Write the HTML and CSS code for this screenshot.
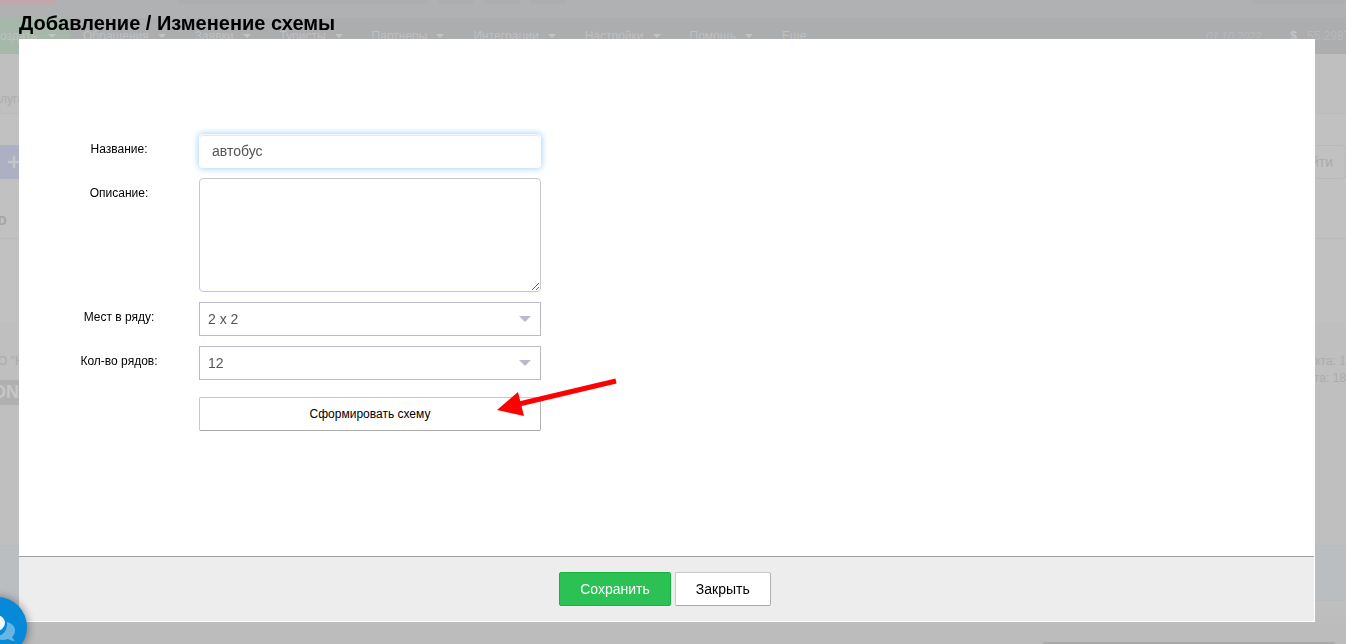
FILE: index.html
```
<!DOCTYPE html>
<html lang="ru">
<head>
<meta charset="utf-8">
<title>Добавление / Изменение схемы</title>
<link rel="stylesheet" href="styles.css">
</head>
<body>
<div class="backdrop">
  <div class="tabs">
    <span class="tab tab-alert"></span>
    <span class="tab tab-wide"></span>
    <span class="tab"></span>
    <span class="tab"></span>
    <span class="tab"></span>
    <span class="tab tab-end"></span>
  </div>
  <nav class="menu">
    <a class="menu-item menu-create" href="#">Создать<i class="caret"></i></a>
    <a class="menu-item" href="#">Обращения<i class="caret"></i></a>
    <a class="menu-item" href="#">Заявки<i class="caret"></i></a>
    <a class="menu-item" href="#">Туристы<i class="caret"></i></a>
    <a class="menu-item" href="#">Партнеры<i class="caret"></i></a>
    <a class="menu-item" href="#">Интеграции<i class="caret"></i></a>
    <a class="menu-item" href="#">Настройки<i class="caret"></i></a>
    <a class="menu-item" href="#">Помощь<i class="caret"></i></a>
    <a class="menu-item" href="#">Еще ...</a>
    <span class="menu-date">01.10.2022</span>
    <b class="menu-currency">$</b>
    <span class="menu-rate">55.2987</span>
  </nav>
  <div class="crumbs"><span>луги</span></div>
  <div class="tools">
    <button class="tool-add" type="button" aria-label="Добавить">
      <svg width="14" height="14" viewBox="0 0 14 14"><path d="M7 2v10M2 7h10" stroke="#c6c6c6" stroke-width="2.500" stroke-linecap="round"/></svg>
    </button>
    <button class="tool-find" type="button">йти</button>
  </div>
  <div class="table-head">D</div>
  <div class="table-space"></div>
  <div class="details">
    <div class="details-left"><span class="company">О "К</span><b class="logo">ON</b></div>
    <div class="details-right"><span>укта: 1</span><span>та: 18</span></div>
  </div>
  <div class="band"></div>
  <div class="bottom"><span class="bottom-panel"></span></div>
</div>

<div class="overlay">
  <h1 class="title">Добавление / Изменение схемы</h1>
  <form class="dialog">
    <div class="fields">
      <label class="label" for="name">Название:</label>
      <input class="field input" id="name" type="text" value="автобус">
      <label class="label" for="description">Описание:</label>
      <textarea class="field textarea" id="description"></textarea>
      <label class="label" for="seats">Мест в ряду:</label>
      <div class="select-wrap">
        <select class="field select" id="seats"><option>2 x 2</option></select>
        <svg class="select-arrow" width="12" height="6" viewBox="0 0 12 6"><path d="M0 0h12L6 6z" fill="#bdb9cd"/></svg>
      </div>
      <label class="label" for="rows">Кол-во рядов:</label>
      <div class="select-wrap">
        <select class="field select" id="rows"><option>12</option></select>
        <svg class="select-arrow" width="12" height="6" viewBox="0 0 12 6"><path d="M0 0h12L6 6z" fill="#bdb9cd"/></svg>
      </div>
      <div class="build-wrap">
        <button class="button build" type="button">Сформировать схему</button>
        <svg class="pointer" width="120" height="38" viewBox="0 0 120 38">
          <path d="M119 3L22 26" stroke="#f00" stroke-width="5"/>
          <path d="M0 32L21 14L27 38z" fill="#f00"/>
        </svg>
      </div>
    </div>
    <footer class="actions">
      <button class="button save" type="submit">Сохранить</button>
      <button class="button close" type="button">Закрыть</button>
    </footer>
  </form>
</div>

<button class="chat" type="button" aria-label="Чат">
  <svg class="chat-icon" width="60" height="60" viewBox="0 0 60 60">
    <ellipse cx="27" cy="26" rx="11" ry="9" fill="#f0f8fd"/>
    <path d="M40 25C45 26 48 30 48 33C48 36 47 38 45 40Q46 42 48 44Q44 44 41 42C36 44 31 43 28 40C36 39 41 33 40 25Z" fill="#66b6e5"/>
  </svg>
</button>
</body>
</html>
```
FILE: styles.css
```
* {
  box-sizing: border-box;
}

body {
  margin: 0;
  height: 100vh;
  overflow: hidden;
  background: #bfbfbf;
  color: #000;
  font-family: "Liberation Sans", Arial, sans-serif;
  font-size: 12px;
}

button,
input,
select,
textarea {
  font-family: inherit;
}

/* Dimmed page behind the dialog */
.backdrop {
  display: flex;
  flex-direction: column;
  height: 100vh;
  color: #acacac;
}

.tabs {
  display: flex;
  gap: 10px;
  height: 18px;
  background: #b0b1b3;
}

.tab {
  width: 36px;
  height: 4px;
  border-radius: 0 0 4px 4px;
  background: #adaeb0;
}

.tab-alert {
  width: 56px;
  height: 5px;
  margin-right: 112px;
  background: #bfa7ab;
}

.tab-wide {
  width: 250px;
}

.tab-end {
  width: 94px;
  margin-left: auto;
}

.menu {
  display: flex;
  align-items: center;
  gap: 29px;
  height: 36px;
  overflow: hidden;
  background: #abadaf;
  white-space: nowrap;
}

.menu-item {
  display: flex;
  align-items: center;
  gap: 9px;
  color: #bfc0c2;
  text-decoration: none;
}

.menu-create {
  justify-content: flex-end;
  gap: 11px;
  width: 69px;
  height: 36px;
  margin-right: -15px;
  padding-right: 13px;
  background: #a5b8aa;
}

.caret {
  border: 4px solid transparent;
  border-top-color: #c2c3c5;
  border-bottom: 0;
}

.menu-date {
  margin-left: auto;
  color: #b8b9bb;
  font-size: 11px;
  font-style: italic;
}

.menu-currency {
  color: #c4c4c5;
}

.menu-rate {
  width: 39px;
  margin-left: -19px;
  color: #b8b9bb;
}

.crumbs {
  height: 60px;
  padding-top: 38px;
  border-bottom: 1px solid #bcbcbc;
}

.tools {
  display: flex;
  justify-content: space-between;
  height: 65px;
  padding-top: 31px;
  background: #c1c1c1;
}

.tool-add {
  display: flex;
  align-items: center;
  justify-content: flex-end;
  width: 21px;
  height: 34px;
  padding: 0;
  border: 0;
  background: #adafc3;
}

.tool-find {
  width: 60px;
  height: 34px;
  padding: 0 12px;
  border: 1px solid #b9b9b9;
  border-radius: 3px;
  background: none;
  color: #acacac;
  font-size: 14px;
  text-align: right;
}

.table-head {
  height: 60px;
  padding-top: 35px;
  border-bottom: 1px solid #bababa;
  background: #c1c1c1;
  color: #a4a4a4;
  font-weight: bold;
  text-indent: -2px;
}

.table-space {
  height: 83px;
  background: #c1c1c1;
}

.details {
  display: flex;
  justify-content: space-between;
  flex: 1;
  padding-top: 31px;
  line-height: 17px;
}

.details-left,
.details-right {
  display: flex;
  flex-direction: column;
}

.details-right {
  align-items: flex-end;
}

.company {
  text-indent: -2px;
}

.logo {
  height: 25px;
  margin-top: 10px;
  background: #b0b0b0;
  color: #c6c6c6;
  font-size: 18px;
  line-height: 25px;
  text-indent: -8px;
}

.band {
  height: 56px;
  border-top: 1px solid #b7bcbe;
  border-bottom: 1px solid #b7bcbe;
  background: #bbbec0;
}

.bottom {
  display: flex;
  align-items: flex-end;
  justify-content: flex-end;
  height: 43px;
  padding-right: 11px;
  background: linear-gradient(#bfbfbf, #bbb);
}

.bottom-panel {
  width: 292px;
  height: 2px;
  border-radius: 3px 3px 0 0;
  background: #a9a9a9;
}

/* Dialog */
.overlay {
  position: fixed;
  inset: 0;
  display: flex;
  flex-direction: column;
  padding: 0 31px 22px 19px;
}

.title {
  margin: 0;
  padding-top: 8px;
  font-size: 20px;
  line-height: 31px;
}

.dialog {
  display: flex;
  flex: 1;
  flex-direction: column;
  padding: 0 1px 1px 0;
  background: #fff;
}

.fields {
  display: grid;
  grid-template-columns: 120px 342px;
  flex: 1;
  align-content: start;
  gap: 10px 20px;
  padding: 95px 40px 0;
}

.label {
  line-height: 30px;
  text-align: center;
}

.field {
  display: block;
  width: 100%;
  height: 34px;
  margin: 0;
  border: 1px solid #c8c8c8;
  border-radius: 4px;
  outline: 0;
  background: #fff;
  color: #555;
  font-size: 14px;
}

.input {
  padding: 0 12px;
  border-color: #f4f8fb #fff #fff;
  box-shadow: inset 0 1px 1px #e6e6e6, 0 0 6px 1px #a8d6f8;
}

.textarea {
  height: 114px;
  resize: vertical;
}

.select-wrap,
.build-wrap {
  position: relative;
}

.select {
  padding: 0 8px;
  border-color: #bdb9cd;
  border-radius: 0;
  appearance: none;
}

.select-arrow {
  position: absolute;
  top: 14px;
  right: 10px;
  pointer-events: none;
}

.build-wrap {
  grid-column: 2;
  margin-top: 7px;
}

.button {
  height: 34px;
  padding: 0 20px;
  border: 1px solid #c8c8c8;
  border-right-color: #b0b0b0;
  border-bottom-color: #a8a8a8;
  border-radius: 2px;
  background: #fff;
  color: #000;
  font-size: 14px;
}

.build {
  display: block;
  width: 100%;
  font-size: 12px;
}

.pointer {
  position: absolute;
  top: -19px;
  left: 298px;
  pointer-events: none;
}

.actions {
  display: flex;
  justify-content: center;
  gap: 4px;
  padding: 15px 3px 15px 0;
  border-top: 1px solid #a0a0a0;
  background: #ededed;
}

.save {
  border-color: #17b33f;
  background: #2bc155;
  color: #fff;
}

.chat {
  position: fixed;
  bottom: -13px;
  left: -33px;
  width: 60px;
  height: 60px;
  padding: 0;
  border: 0;
  border-radius: 50%;
  background: #0689d8;
  box-shadow: 0 1px 8px 1px rgba(0, 0, 0, 0.4);
}

.chat-icon {
  display: block;
}
```
